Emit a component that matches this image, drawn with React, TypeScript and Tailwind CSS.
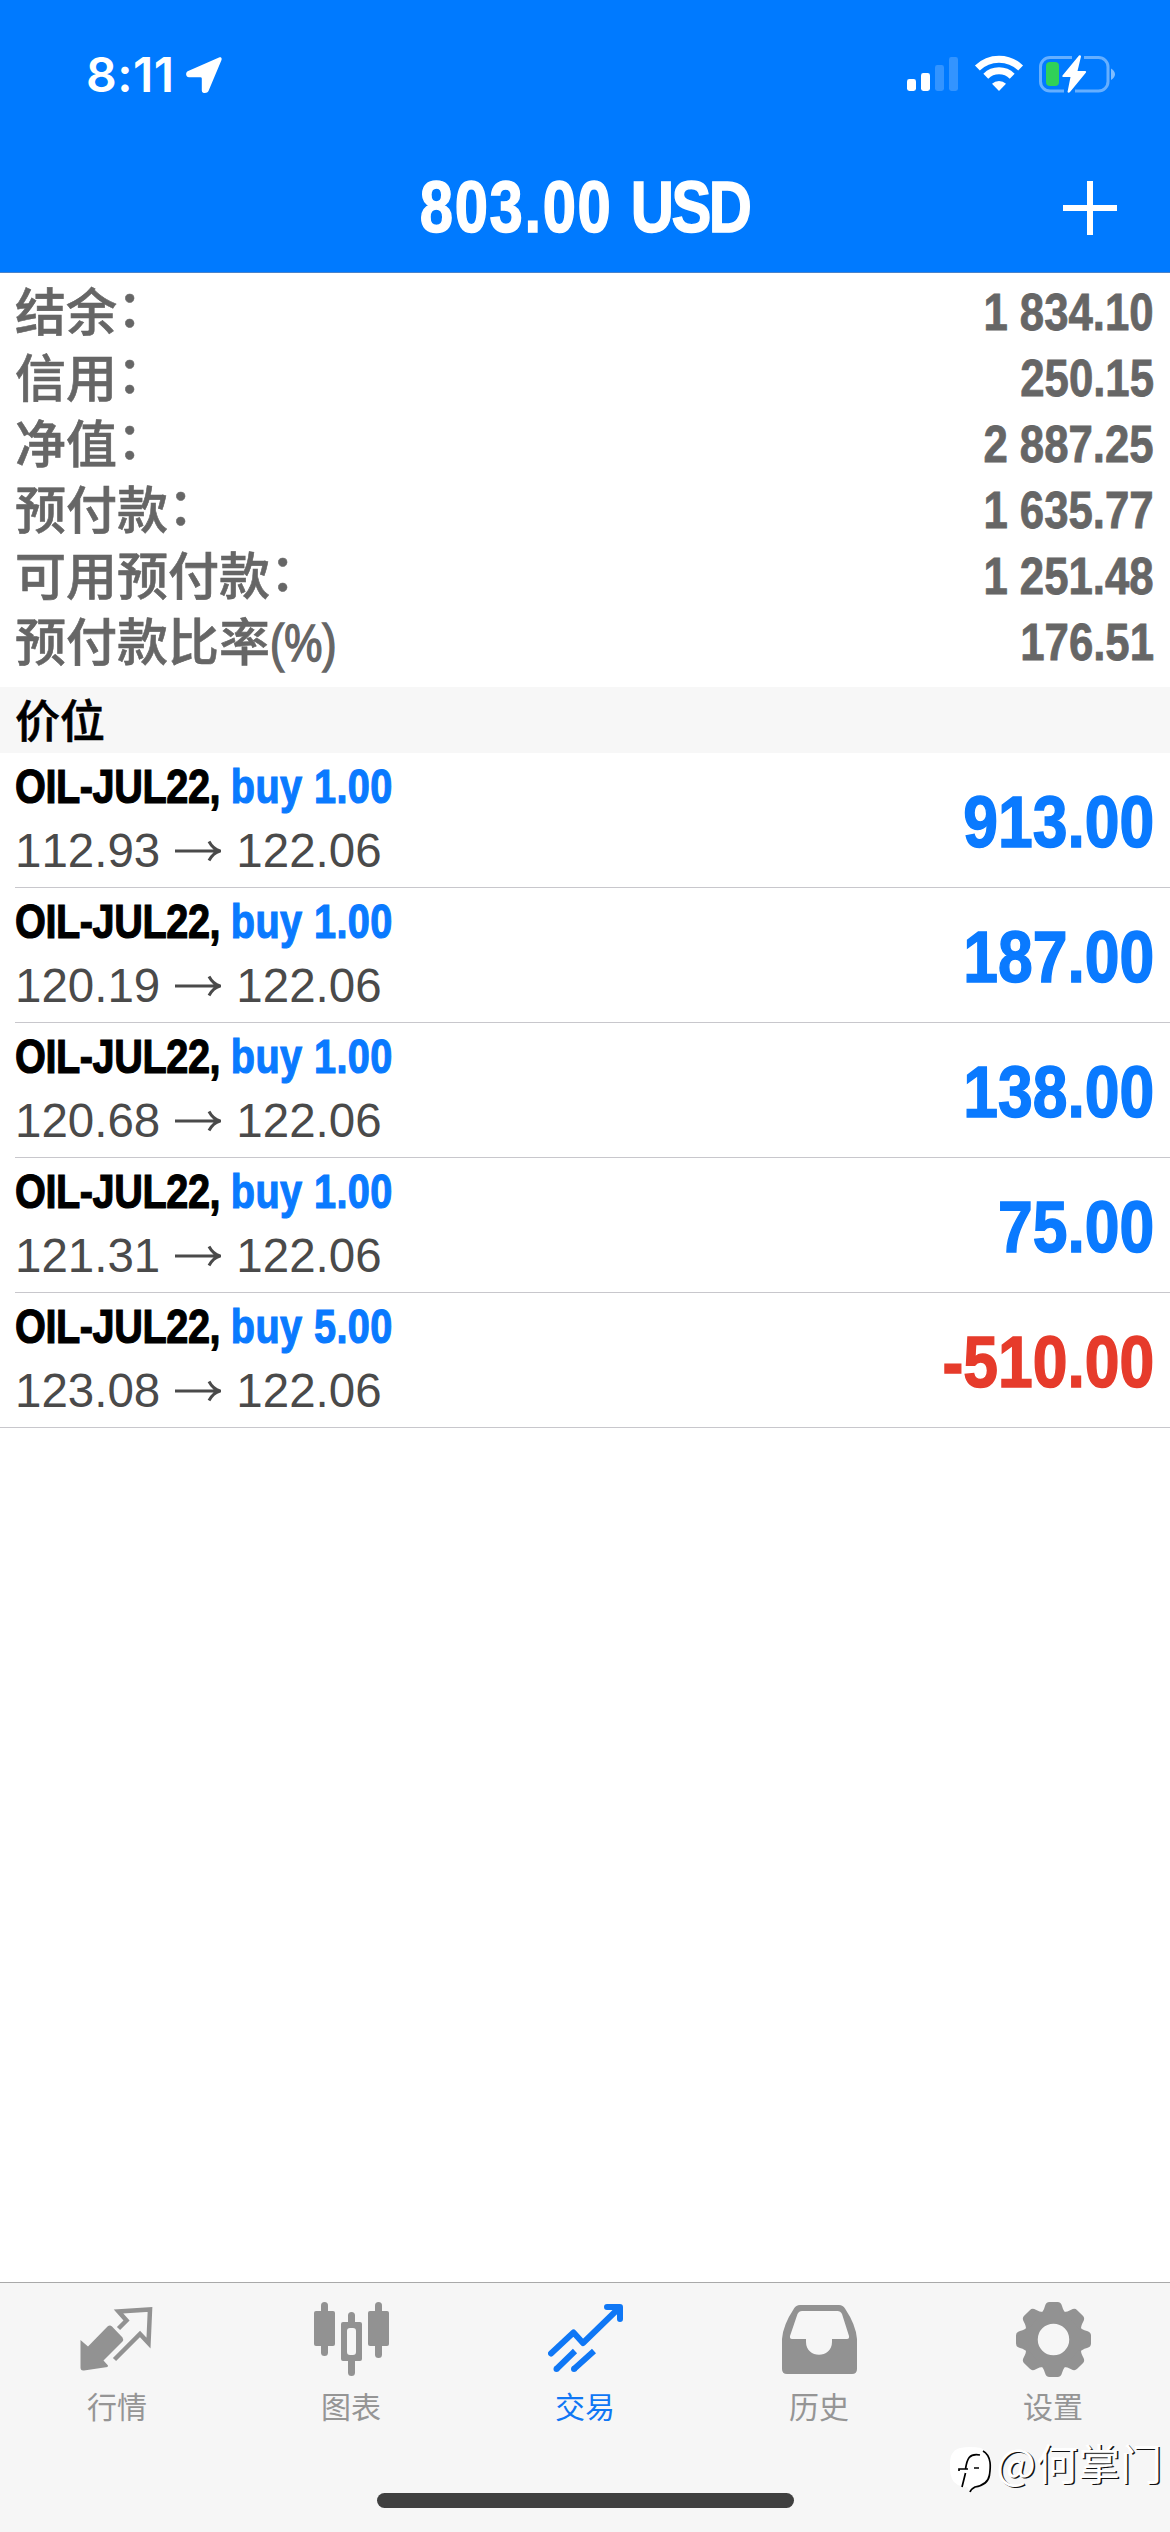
import { FC, ReactNode } from "react";

interface SummaryItem {
  label: string;
  suffix: string;
  value: string;
}

interface Position {
  symbol: string;
  volume: string;
  open: string;
  current: string;
  profit: number;
}

const summary: SummaryItem[] = [
  { label: "结余", suffix: "：", value: "1 834.10" },
  { label: "信用", suffix: "：", value: "250.15" },
  { label: "净值", suffix: "：", value: "2 887.25" },
  { label: "预付款", suffix: "：", value: "1 635.77" },
  { label: "可用预付款", suffix: "：", value: "1 251.48" },
  { label: "预付款比率", suffix: "(%)", value: "176.51" },
];

const positions: Position[] = [
  { symbol: "OIL-JUL22", volume: "1.00", open: "112.93", current: "122.06", profit: 913 },
  { symbol: "OIL-JUL22", volume: "1.00", open: "120.19", current: "122.06", profit: 187 },
  { symbol: "OIL-JUL22", volume: "1.00", open: "120.68", current: "122.06", profit: 138 },
  { symbol: "OIL-JUL22", volume: "1.00", open: "121.31", current: "122.06", profit: 75 },
  { symbol: "OIL-JUL22", volume: "5.00", open: "123.08", current: "122.06", profit: -510 },
];

const StatusBar = () => (
  <div className="flex h-[141px] items-start justify-between pr-[54px] pl-[86px] pt-[50px]">
    <div className="flex items-start">
      <span className="w-[86px] font-['Inter','Liberation_Sans',sans-serif] text-[48px] leading-[50px] font-semibold tracking-[0.5px] whitespace-nowrap">
        8:11
      </span>
      <svg width="36" height="36" viewBox="0 0 36 36" className="mt-[7px] ml-[14px]">
        <path
          d="M33 0.6C35 -0.2 36.2 1 35.4 3.2L22.5 34C21.5 36.6 15.8 36.8 15.8 33.4V21.6Q15.8 20.2 14.4 20.2H3C-0.6 20.2 -0.8 15.2 2.2 14Z"
          fill="white"
        />
      </svg>
    </div>
    <svg width="210" height="40" viewBox="0 0 210 40" className="mt-[5px]" fill="white">
      <rect x="1" y="24" width="9" height="12" rx="2.4" />
      <rect x="15" y="18" width="9" height="18" rx="2.4" />
      <rect x="29" y="10" width="9" height="26" rx="2.4" opacity=".2" />
      <rect x="43" y="2" width="9" height="34" rx="2.4" opacity=".2" />
      <g fill="none" stroke="white" strokeWidth="7">
        <path d="M71.4 12.9a31 31 0 0 1 43.2 0" />
        <path d="M79.8 21.2a19 19 0 0 1 26.400 0" />
      </g>
      <path d="M86 28.800a10 10 0 0 1 14 0L93 36Z" />
      <path
        d="M166 2.500H144a9.500 9.500 0 0 0-9.500 9.500V26.500a9.500 9.500 0 0 0 9.500 9.500H158M169 36H192.500a9.500 9.500 0 0 0 9.500-9.500V12a9.500 9.500 0 0 0-9.500-9.500H178"
        fill="none"
        stroke="white"
        strokeWidth="3"
        opacity=".4"
      />
      <path d="M205 13.500Q209 16 209 19.200T205 25Z" opacity=".5" />
      <rect x="140" y="7" width="13" height="24" rx="4" fill="#30d158" />
      <path d="M173 0.500L156.500 20.500Q156 22 157.500 22H164.500L161.500 37Q162.500 38.500 164 37L180 17.500Q180.500 16 179 16H171.500L175 1.500Q174.500 -0.500 173 0.500Z" />
    </svg>
  </div>
);

const Arrow = () => (
  <svg width="46" height="22" viewBox="0 0 46 22" className="mr-[15px] ml-[15px]">
    <path d="M0 11H44M34 1.500Q38 9 45 11Q38 13 34 20.500" fill="none" stroke="#4a4a4a" strokeWidth="3" />
  </svg>
);

const PositionRow: FC<{ position: Position; last: boolean }> = ({ position, last }) => (
  <li className={last ? "border-b border-[#c8c7cc]" : "pl-[15px]"}>
    <div
      className={
        last
          ? "flex h-[134px] justify-between pr-4 pl-[15px]"
          : "flex h-[135px] justify-between border-b border-[#c8c7cc] pr-4"
      }
    >
      <div className="w-[400px] pt-[5px]">
        <p className="origin-left scale-x-[0.826] font-['Liberation_Sans',sans-serif] text-[48px] leading-[58px] font-bold tracking-[-0.5px] whitespace-pre text-black [-webkit-text-stroke:1.2px]">
          {position.symbol}, <span className="tracking-[0.5px] text-[#0a7aff]">buy {position.volume}</span>
        </p>
        <p className="flex items-center font-['Liberation_Sans',sans-serif] text-[47.500px] leading-[70px] text-[#4a4a4a] [font-kerning:none]">
          {position.open}
          <Arrow />
          {position.current}
        </p>
      </div>
      <span
        className={`origin-right scale-x-[0.867] font-['Liberation_Sans',sans-serif] text-[72px] leading-[138px] font-bold [-webkit-text-stroke:1.5px] ${
          position.profit < 0 ? "text-[#e63b2b]" : "text-[#0a7aff]"
        }`}
      >
        {position.profit.toFixed(2)}
      </span>
    </div>
  </li>
);

const QuotesIcon = () => (
  <svg width="75" height="75" viewBox="0 0 75 75">
    <path
      d="M0.500 40V38L8 44.500L27.500 24.500Q30 22.500 32 24.500L42.500 35.500Q44 38 42.500 39.500L23.500 58.500L28 63.500L27.500 65L4 68.500Q0.500 69 0.500 65.500Z"
      fill="#929292"
    />
    <path
      d="M38.500 26.500L46.500 18.500L38.500 9.500L70 7.500L68.500 41L60 32L34.500 57.500"
      fill="none"
      stroke="#929292"
      strokeWidth="4.500"
    />
  </svg>
);

const ChartIcon = () => (
  <svg width="75" height="75" viewBox="0 0 75 75" fill="#929292">
    <rect x="7" y="0" width="7" height="54" rx="3.500" />
    <rect x="0" y="9" width="21" height="35" rx="2" />
    <rect x="61" y="0" width="7" height="56" rx="3.500" />
    <rect x="54" y="9" width="21" height="35" rx="2" />
    <path
      d="M34 21V13.500a3.500 3.500 0 0 1 7 0V20H46a2 2 0 0 1 2 2V57a2 2 0 0 1-2 2H41V70.500a3.500 3.500 0 0 1-7 0V59H29a2 2 0 0 1-2-2V22a2 2 0 0 1 2-2H34ZM36 26a3 3 0 0 0-3 3V50a3 3 0 0 0 3 3H39a3 3 0 0 0 3-3V29a3 3 0 0 0-3-3Z"
      fillRule="evenodd"
    />
  </svg>
);

const TradeIcon = () => (
  <svg width="75" height="75" viewBox="0 0 75 75" fill="none" stroke="#0f77f5" strokeWidth="6">
    <path
      d="M3 51.500L25.500 30.500L35 41L70 7M59 5H72V17"
      strokeLinecap="round"
      strokeLinejoin="round"
    />
    <path d="M8.500 67L27 49M26 67L46 49" />
    <g fill="#0f77f5" stroke="none">
      <circle cx="8.500" cy="67" r="3" />
      <circle cx="26" cy="67" r="3" />
    </g>
  </svg>
);

const HistoryIcon = () => (
  <svg width="75" height="75" viewBox="0 0 75 75">
    <path
      d="M18 3H57Q61 3 63 6.500Q74 23 75 37V67Q75 72 70 72H5Q0 72 0 67V37Q1 23 12 6.500Q14 3 18 3ZM20 9Q17 9 15.500 12L8 34Q7.500 37 10 37H24V40C24 57 50 57 50 40V37H65Q67.500 37 67 34L60 12Q58.500 9 55.500 9Z"
      fill="#929292"
      fillRule="evenodd"
    />
  </svg>
);

const SettingsIcon = () => (
  <svg width="75" height="75" viewBox="-37.500 -37.500 75 75" fill="#929292">
    <circle r="22.500" fill="none" stroke="#929292" strokeWidth="13.500" />
    {[0, 45, 90, 135, 180, 225, 270, 315].map((angle) => (
      <path
        key={angle}
        d="M-13 -26Q-10 -28 -8.500 -33.500Q-7.500 -37.500 -4 -37.500H4Q7.500 -37.500 8.500 -33.500Q10 -28 13 -26Z"
        transform={`rotate(${angle})`}
      />
    ))}
  </svg>
);

const tabs: { label: string; icon: ReactNode; active?: boolean }[] = [
  { label: "行情", icon: <QuotesIcon /> },
  { label: "图表", icon: <ChartIcon /> },
  { label: "交易", icon: <TradeIcon />, active: true },
  { label: "历史", icon: <HistoryIcon /> },
  { label: "设置", icon: <SettingsIcon /> },
];

const Watermark = () => (
  <div className="absolute top-[161px] right-[8px] flex items-start">
    <svg width="42" height="50" viewBox="0 0 42 50" className="mr-[4px]">
      <path d="M10 4Q20 2 31 4Q40 8 40 20Q42 32 37 38Q32 43 25 44L20 48L17 43Q5 42 2 35Q-2 24 1 12Q4 5 10 4Z" fill="white" />
      <path
        d="M30 11C19 9 17 15 15.500 25M9 27V25H18M24 24H29M15.500 29L12 43M33 7C42 12 40.500 24 39.500 31C38 40 31 42 25 43Q21 45 20 48"
        fill="none"
        stroke="black"
        strokeWidth="1.700"
      />
    </svg>
    <span className="font-['Noto_Sans_CJK_SC',sans-serif] text-[42px] leading-[36px] text-white [text-shadow:1.500px_1px_0_#111]">
      @何掌门
    </span>
  </div>
);

export default function App() {
  return (
    <div className="flex h-[2532px] w-[1170px] flex-col overflow-hidden bg-white">
      <header className="h-[273px] shrink-0 border-b border-[#4b83c9] bg-[#007aff] text-white">
        <StatusBar />
        <div className="grid h-[131px] grid-cols-[1fr_auto_1fr] items-center px-[53px]">
          <span />
          <h1 className="scale-x-[0.83] font-['Liberation_Sans',sans-serif] text-[72px] leading-[133px] font-bold tracking-[2px] whitespace-nowrap [-webkit-text-stroke:1.5px]">
            803.00 <span className="tracking-[-3px]">USD</span>
          </h1>
          <svg width="54" height="54" viewBox="0 0 54 54" className="justify-self-end">
            <path d="M0 27H54M27 0V54" stroke="white" strokeWidth="6" />
          </svg>
        </div>
      </header>

      <dl className="h-[414px] shrink-0 pr-4 pl-[15px] pt-[6px]">
        {summary.map((item) => (
          <div key={item.label} className="flex h-[66px] justify-between text-[#666]">
            <dt className="flex font-['Liberation_Sans','Noto_Sans_CJK_SC',sans-serif] text-[51px] leading-[69px] font-medium [-webkit-text-stroke:0.6px]">
              {item.label}
              <span
                className={
                  item.suffix === "："
                    ? "-translate-y-[4px]"
                    : "origin-left scale-x-[0.84] [-webkit-text-stroke:1.5px]"
                }
              >
                {item.suffix}
              </span>
            </dt>
            <dd className="origin-right scale-x-[0.857] font-['Liberation_Sans',sans-serif] text-[51px] leading-[67px] font-bold [-webkit-text-stroke:0.8px]">
              {item.value}
            </dd>
          </div>
        ))}
      </dl>

      <h2 className="h-[66px] shrink-0 bg-[#f7f7f7] pl-[15px] font-['Noto_Sans_CJK_SC',sans-serif] text-[45px] leading-[64px] font-medium text-black [-webkit-text-stroke:0.6px]">
        价位
      </h2>

      <ul className="flex-1">
        {positions.map((position, index) => (
          <PositionRow key={position.open} position={position} last={index === positions.length - 1} />
        ))}
      </ul>

      <footer className="relative h-[250px] shrink-0 border-t border-[#a9a9a9] bg-[#f6f6f6]">
        <nav className="grid h-[210px] grid-cols-5 pt-[19px]">
          {tabs.map((tab) => (
            <div key={tab.label} className="flex flex-col items-center">
              {tab.icon}
              <span
                className={`mt-[6px] font-['Noto_Sans_CJK_SC',sans-serif] text-[30px] leading-[44px] ${
                  tab.active ? "text-[#0f77f5]" : "text-[#959595]"
                }`}
              >
                {tab.label}
              </span>
            </div>
          ))}
        </nav>
        <div className="mx-auto h-[15px] w-[417px] rounded-full bg-[#404040]" />
        <Watermark />
      </footer>
    </div>
  );
}
